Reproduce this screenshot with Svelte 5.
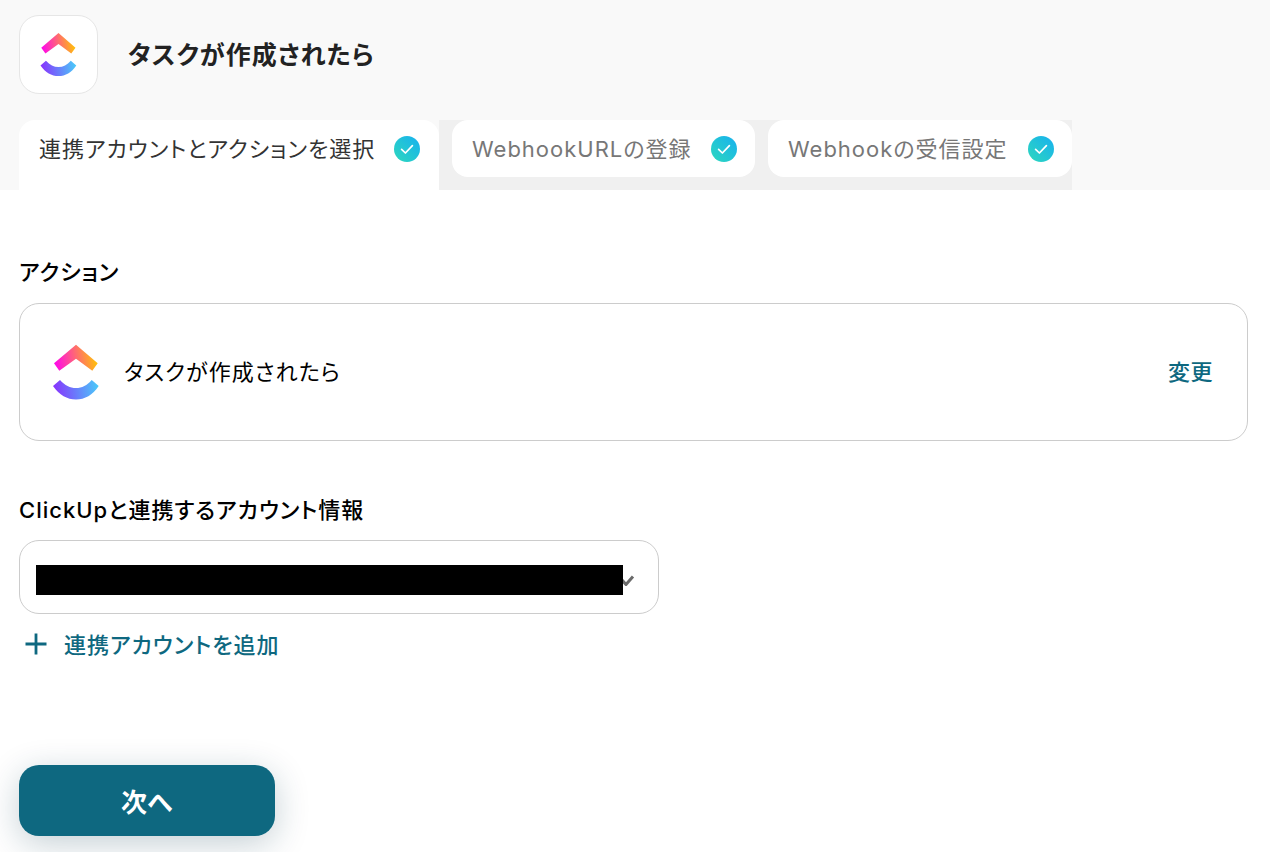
<script>
  const tabs = [
    { label: 'WebhookURLの登録' },
    { label: 'Webhookの受信設定' }
  ];
</script>

{#snippet logo(cls, id)}
  <svg class={cls} viewBox="50 342 52 60" aria-hidden="true">
    <defs>
      <linearGradient id={id + 'a'} gradientUnits="userSpaceOnUse" x1="54" y1="366" x2="98" y2="358">
        <stop offset="0" stop-color="#ff02f0" />
        <stop offset="1" stop-color="#ffc800" />
      </linearGradient>
      <linearGradient id={id + 'b'} gradientUnits="userSpaceOnUse" x1="53" y1="392" x2="99" y2="386">
        <stop offset="0" stop-color="#8930fd" />
        <stop offset="1" stop-color="#49ccf9" />
      </linearGradient>
    </defs>
    <path d="M76 344.7 L97.7 363.3 L92.3 370.7 L76 358.7 L59.3 370.7 L54 363.3 Z" fill={`url(#${id}a)`} />
    <path d="M53 386 L60 380 C65 385.5 70 388 76 388 C82 388 87 385.5 91.7 380 L98.7 386 C92.5 395 85 399.5 76 399.5 C67 399.5 59.5 395 53 386 Z" fill={`url(#${id}b)`} />
  </svg>
{/snippet}

{#snippet check(id)}
  <svg class="check" viewBox="0 0 26 26" aria-hidden="true">
    <defs>
      <linearGradient id={id} x1="0" y1="1" x2="1" y2="0">
        <stop offset="0" stop-color="#2dd8bd" />
        <stop offset="1" stop-color="#17b0f0" />
      </linearGradient>
    </defs>
    <circle cx="13" cy="13" r="13" fill={`url(#${id})`} />
    <path d="M7.6 13.4 L11.4 17 L18.4 9.6" fill="none" stroke="#fff" stroke-width="1.7" stroke-linecap="round" stroke-linejoin="round" />
  </svg>
{/snippet}

<div class="page">
  <header class="head">
    <div class="title-row">
      <div class="logo-box">{@render logo('logo-small', 'ls')}</div>
      <h1>タスクが作成されたら</h1>
    </div>
    <nav class="tabs">
      <div class="tab active">
        <span>連携アカウントとアクションを選択</span>
        {@render check('c0')}
      </div>
      <div class="rest">
        {#each tabs as t, i}
          <div class="tab">
            <span>{t.label}</span>
            {@render check('c' + (i + 1))}
          </div>
        {/each}
      </div>
    </nav>
  </header>

  <main class="body">
    <h2 class="label first">アクション</h2>
    <div class="card">
      {@render logo('logo-large', 'll')}
      <span class="card-text">タスクが作成されたら</span>
      <span class="change">変更</span>
    </div>

    <h2 class="label second">ClickUpと連携するアカウント情報</h2>
    <div class="select">
      <div class="mask"></div>
      <svg class="chev" viewBox="0 0 14 12" aria-hidden="true">
        <path d="M1 6 L5 10.5 L12 2.5" fill="none" stroke="#6a6a6a" stroke-width="3" />
      </svg>
    </div>
    <div class="add">
      <svg class="plus" viewBox="0 0 24 24" aria-hidden="true">
        <path d="M12 1.5 V22.5 M1.5 12 H22.5" fill="none" stroke="#0e6880" stroke-width="2.8" />
      </svg>
      <span>連携アカウントを追加</span>
    </div>

    <button class="next">次へ</button>
  </main>
</div>

<style>
  :global(body) {
    margin: 0;
    background: #fff;
  }
  .page {
    font-family: Inter, "Noto Sans CJK JP", "Liberation Sans", sans-serif;
    font-feature-settings: "palt";
    width: 1270px;
    height: 852px;
    overflow: hidden;
    color: #000;
  }
  .head {
    background: #f9f9f9;
    height: 190px;
    padding: 15px 0 0 19px;
    box-sizing: border-box;
  }
  .title-row {
    display: flex;
    align-items: center;
    height: 79px;
  }
  .logo-box {
    width: 79px;
    height: 79px;
    box-sizing: border-box;
    background: #fff;
    border: 1px solid #e6e6e6;
    border-radius: 20px;
    display: flex;
    align-items: center;
    justify-content: center;
  }
  .logo-small {
    width: 41px;
    height: 47px;
  }
  .logo-large {
    width: 52px;
    height: 60px;
    margin-left: 30px;
  }
  h1 {
    margin: 0 0 4px 30px;
    font-size: 25px;
    letter-spacing: 1px;
    font-weight: 700;
    color: #222;
  }
  .tabs {
    display: flex;
    margin-top: 26px;
    height: 70px;
    width: max-content;
  }
  .rest {
    display: flex;
    gap: 13px;
    padding-left: 13px;
    background: #f0f0f0;
    height: 70px;
    align-items: flex-start;
  }
  .tab {
    display: flex;
    align-items: center;
    height: 57px;
    box-sizing: border-box;
    background: #fff;
    border-radius: 16px;
    padding: 0 18px 0 20px;
    font-size: 22px;
    line-height: 28px;
    letter-spacing: 1px;
    font-weight: 400;
    color: #777;
    white-space: nowrap;
    justify-content: space-between;
  }
  .tab.active {
    height: 70px;
    width: 420px;
    border-radius: 16px 16px 0 0;
    color: #333;
    padding: 0 19px 13px 20px;
  }
  .rest .tab {
    width: 303px;
  }
  .rest .tab:last-child {
    width: 304px;
  }
  .check {
    width: 26px;
    height: 26px;
    flex: none;
  }
  .body {
    padding: 0 22px 0 19px;
  }
  .label {
    margin: 0;
    font-size: 22px;
    line-height: 30px;
    letter-spacing: 1px;
    font-weight: 500;
    color: #000;
  }
  .label.first {
    margin-top: 67px;
  }
  .label.second {
    margin-top: 54px;
  }
  .card {
    margin-top: 16px;
    height: 138px;
    box-sizing: border-box;
    border: 1px solid #ccc;
    border-radius: 20px;
    display: flex;
    align-items: center;
  }
  .card-text {
    margin-left: 22px;
    font-size: 22px;
    letter-spacing: 1.1px;
    margin-bottom: 4px;
  }
  .change {
    margin-left: auto;
    margin-right: 34px;
    font-size: 22px;
    letter-spacing: 0.5px;
    font-weight: 500;
    color: #0e6880;
    margin-bottom: 4px;
  }
  .select {
    margin-top: 15px;
    width: 640px;
    height: 74px;
    box-sizing: border-box;
    border: 1px solid #ccc;
    border-radius: 20px;
    display: flex;
    align-items: center;
    padding-left: 16px;
  }
  .mask {
    position: relative;
    width: 587px;
    height: 30px;
    background: #000;
    margin-top: 6px;
    z-index: 1;
  }
  .chev {
    width: 14px;
    height: 12px;
    margin-left: -2px;
    margin-top: 5px;
  }
  .add {
    margin-top: 14px;
    display: flex;
    align-items: center;
    height: 32px;
    color: #0e6880;
    font-size: 22px;
    letter-spacing: 1px;
    font-weight: 500;
  }
  .add span {
    margin-bottom: 2px;
  }
  .plus {
    width: 24px;
    height: 24px;
    margin-left: 5px;
    margin-right: 16px;
  }
  .next {
    display: block;
    margin-top: 105px;
    width: 256px;
    height: 71px;
    border: 0;
    border-radius: 20px;
    background: #0e6880;
    color: #fff;
    font-family: inherit;
    font-feature-settings: normal;
    font-size: 26px;
    font-weight: 700;
    box-shadow: 0 8px 34px rgba(14, 60, 80, 0.24);
  }
</style>
